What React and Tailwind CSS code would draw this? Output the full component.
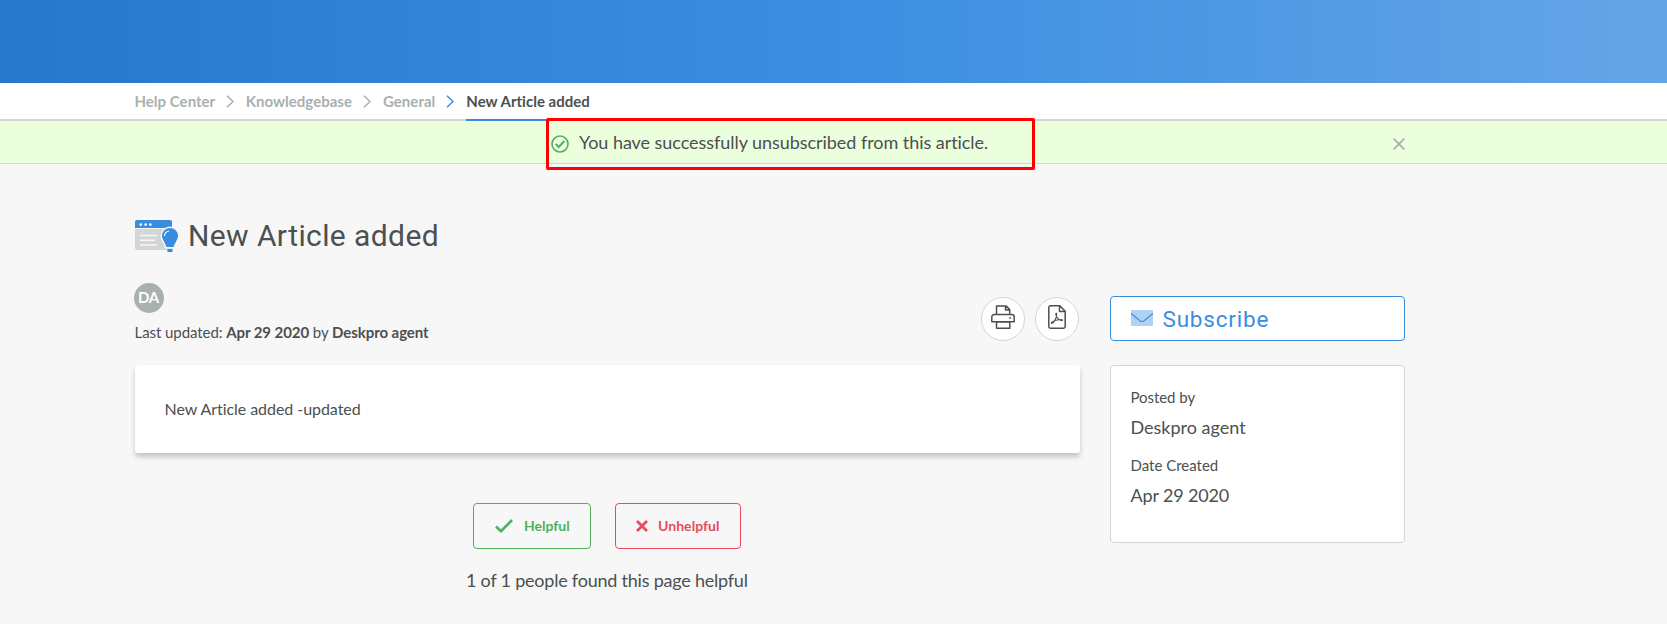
import React from "react";

const Chevron = ({ className }) => (
  <svg className={className} width="8" height="13" viewBox="0 0 8 13" fill="none" stroke="currentColor" strokeWidth="1.5">
    <path d="M1 .7 7 6.5 1 12.3" />
  </svg>
);

const ArticleIcon = () => (
  <svg className="shrink-0" width="44" height="33" viewBox="0 0 44 33">
    <path d="M0 9h37v19a2 2 0 0 1-2 2H2a2 2 0 0 1-2-2z" fill="#d2d6d6" />
    <path d="M2 0h33a2 2 0 0 1 2 2v6H0V2a2 2 0 0 1 2-2z" fill="#3a8dde" />
    <g fill="#fff">
      <circle cx="5.8" cy="4.6" r="1.3" />
      <circle cx="10.7" cy="4.6" r="1.3" />
      <circle cx="15.4" cy="4.6" r="1.3" />
    </g>
    <path d="M5 15.500h17M5 20.300h15M5 25h17" stroke="#f7f7f7" strokeWidth="1.500" />
    <path d="M35 7.200a8.800 8.800 0 0 0-8.800 8.800c0 4.500 3.800 6.500 4.600 11.700h8.400c.8-5.200 4.600-7.200 4.600-11.700A8.800 8.800 0 0 0 35 7.200z" fill="#3a8dde" stroke="#f7f7f7" strokeWidth="1.400" />
    <path d="M32.400 29h5.200v3h-5.200z" fill="#3a8dde" />
    <path d="M29.500 16a5.500 5.500 0 0 1 4.500-5" stroke="#fff" strokeWidth="1.200" fill="none" />
  </svg>
);

const PrintIcon = () => (
  <svg width="24" height="24" viewBox="0 0 24 24" fill="none" stroke="#4b5050" strokeWidth="1.500" strokeLinejoin="round">
    <path d="M5.500 9.500V.9h9.500l3.700 3.700v4.900M14.500 1v4h4" />
    <path d="M5.500 16.800H.8V12a2.500 2.500 0 0 1 2.500-2.500h17.400a2.500 2.500 0 0 1 2.500 2.500v4.800z" />
    <path d="M5.500 16.800h13.300v6.400H5.500z" />
    <circle cx="19" cy="13" r=".3" />
  </svg>
);

const PdfIcon = () => (
  <svg width="18" height="24" viewBox="0 0 18 24" fill="none" stroke="#4b5050" strokeWidth="1.500" strokeLinejoin="round">
    <path d="M2.500.8h9.300l5.400 5.500v15.200a1.700 1.700 0 0 1-1.700 1.700h-13A1.700 1.700 0 0 1 .8 21.500v-19A1.700 1.700 0 0 1 2.500.8zM11.500 1v5.600H17" />
    <path d="M3.600 18.500c1.500.5 5.300-5.500 5.100-9.500 0-1.300-1.200-1-.9.400.5 3 3.400 6.300 6.100 6.200 1.300-.2.600-1.300-1.400-1.100-2.700.1-6.200 1-8.300 2.500-.8.600-1 1.200-.6 1.500z" strokeWidth="1.100" />
  </svg>
);

const crumb = "text-[#a9b0b0]";

export default function App() {
  return (
    <div className="relative h-[624px] w-[1667px] overflow-hidden bg-[#f7f7f7] font-[Lato,sans-serif] text-[#4b5050] [font-variant-ligatures:none]">
      <header className="h-[83px] bg-[linear-gradient(90deg,#2578ca_0%,#3b8ee1_50%,#65a5e6_100%)]" />
      <nav className="flex h-[38px] border-b-2 border-[#d2d6d6] bg-white pl-[134.500px] text-[15px] font-bold leading-[37px] tracking-[0.020px]">
        <span className={crumb}>Help Center</span>
        <Chevron className="ml-[11px] mr-[11.500px] mt-3 text-[#a9b0b0]" />
        <span className={crumb}>Knowledgebase</span>
        <Chevron className="ml-[11px] mr-[12px] mt-3 text-[#a9b0b0]" />
        <span className={crumb}>General</span>
        <Chevron className="ml-[11px] mr-[12px] mt-3 text-[#3a8dde]" />
        <span className="h-[38px] border-b-2 border-[#3a8dde]">New Article added</span>
      </nav>
      <div className="flex h-[43px] items-center border-b border-[#d2d6d6] bg-[#ebffdd] pl-[551px] pr-[262px]">
        <svg className="mt-[3px]" width="18" height="18" viewBox="0 0 18 18" fill="none" stroke="#4fb05f">
          <circle cx="9" cy="9" r="8" strokeWidth="1.600" />
          <path d="m4.800 9 3 3L13.300 6" strokeWidth="2" />
        </svg>
        <span className="ml-[10px] text-[18px] leading-[42px] tracking-[-0.050px]">You have successfully unsubscribed from this article.</span>
        <svg className="ml-auto mt-1" width="12" height="12" viewBox="0 0 12 12" fill="none" stroke="#a9b0b0" strokeWidth="1.800">
          <path d="m.6.600 10.800 10.800M11.400.600.6 11.400" />
        </svg>
      </div>
      <div className="absolute left-[546px] top-[118px] h-[52px] w-[489px] rounded-[2px] border-[3px] border-[#ff0000]" />

      <main className="ml-[135px] w-[1270px] pt-[56px]">
        <div className="flex h-[33px]">
          <ArticleIcon />
          <h1 className="ml-[9px] font-[Roboto,sans-serif] text-[30px] leading-[31px] tracking-[0.400px]">New Article added</h1>
        </div>
        <div className="flex gap-[30px] pt-[30px]">
          <section className="w-[945px]">
            <div className="flex h-[82px] justify-between">
              <div>
                <div className="-ml-px flex size-[30px] items-center justify-center rounded-full bg-[#a9b0b0] pb-px pr-px text-[15px] font-bold tracking-[-0.300px] text-white">DA</div>
                <p className="-ml-[0.500px] mt-[8px] text-[15px] leading-[22px] tracking-[-0.070px]">Last updated: <b>Apr 29 2020</b> by <b>Deskpro agent</b></p>
              </div>
              <div className="mr-px mt-[14px] flex gap-[10px]">
                <button className="flex size-11 items-center justify-center rounded-full border border-[#d2d6d6] bg-white pb-1"><PrintIcon /></button>
                <button className="flex size-11 items-center justify-center rounded-full border border-[#d2d6d6] bg-white pb-1"><PdfIcon /></button>
              </div>
            </div>
            <article className="h-[88px] rounded-[3px] bg-white pl-[29.500px] text-[16px] leading-[87px] tracking-[-0.050px] shadow-[0_4px_5px_rgba(0,0,0,0.200)]">New Article added -updated</article>
            <div className="flex gap-6 pl-[338px] pt-[50px] text-[14px] font-bold leading-5">
              <button className="flex h-[46px] w-[118px] items-center rounded-[4px] border border-[#4fb05f] pl-[21px] text-[#4fb05f]">
                <svg width="18" height="14" viewBox="0 0 18 14" fill="none" stroke="currentColor" strokeWidth="2.600"><path d="m1 7.500 5 4.700L17 1" /></svg>
                <span className="ml-[11px]">Helpful</span>
              </button>
              <button className="flex h-[46px] w-[126px] items-center rounded-[4px] border border-[#e94b5a] pl-[20px] text-[#e94b5a]">
                <svg width="12" height="12" viewBox="0 0 12 12" fill="none" stroke="currentColor" strokeWidth="2.800"><path d="m1 1 10 10M11 1 1 11" /></svg>
                <span className="ml-[10px] tracking-[0.050px]">Unhelpful</span>
              </button>
            </div>
            <p className="ml-[331px] mt-[19px] text-[18px] leading-6 tracking-[-0.220px]">1 of 1 people found this page helpful</p>
          </section>
          <aside className="w-[295px] pt-[13px]">
            <button className="flex h-[45px] w-full items-center rounded-[4px] border border-[#3a8dde] bg-white pl-[20px] text-[#3a8dde]">
              <svg className="-mt-px" width="22" height="16" viewBox="0 0 22 16"><rect width="22" height="16" rx="1" fill="#b0d1f3" /><path d="m0 3.500 9 7.300q2 1.500 4 0l9-7.300" fill="none" stroke="#3a8dde" strokeWidth="1.100" /></svg>
              <span className="ml-[9.500px] font-[Roboto,sans-serif] text-[22.500px] leading-[34px] tracking-[0.800px]">Subscribe</span>
            </button>
            <div className="mt-6 h-[178px] rounded-[4px] border border-[#d2d6d6] bg-white pl-[19.500px] pt-[20px]">
              <p className="text-[15px] leading-[22px] tracking-[-0.050px]">Posted by</p>
              <p className="mt-[7px] text-[18px] leading-6">Deskpro agent</p>
              <p className="mt-[15px] text-[15px] leading-[22px]">Date Created</p>
              <p className="mt-[7px] text-[18px] leading-6 tracking-[-0.150px]">Apr 29 2020</p>
            </div>
          </aside>
        </div>
      </main>
    </div>
  );
}
